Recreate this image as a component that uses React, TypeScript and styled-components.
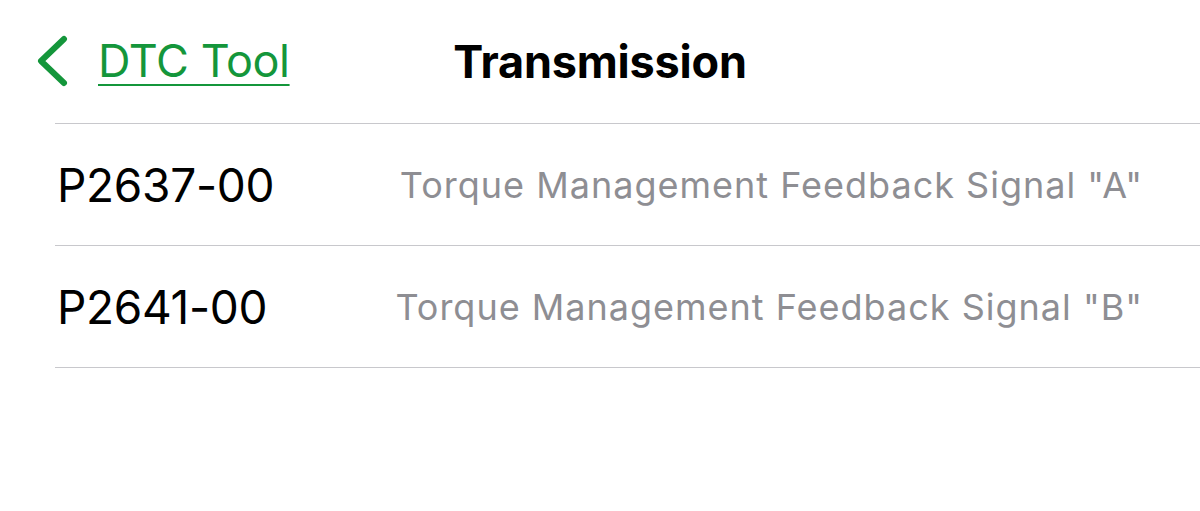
import styled, { createGlobalStyle } from "styled-components";

const GlobalStyle = createGlobalStyle`
  html, body {
    margin: 0;
    padding: 0;
    background: #ffffff;
  }
  body {
    font-family: Inter, "Noto Sans", "Liberation Sans", sans-serif;
    -webkit-font-smoothing: antialiased;
  }
`;

const Screen = styled.div`
  width: 1200px;
  height: 511px;
  background: #ffffff;
  overflow: hidden;
`;

const NavBar = styled.header`
  display: grid;
  grid-template-columns: 1fr auto 1fr;
  align-items: center;
  height: 123px;
  box-sizing: border-box;
`;

const BackButton = styled.a`
  display: flex;
  align-items: center;
  gap: 28px;
  margin: -2px 0 0 36px;
  color: #14963b;
  text-decoration: none;
  cursor: pointer;
`;

const BackLabel = styled.span`
  font-size: 45px;
  font-weight: 400;
  letter-spacing: -0.4px;
  text-decoration: underline;
  text-decoration-thickness: 2px;
  text-underline-offset: 7px;
`;

const Title = styled.h1`
  margin: 0;
  font-size: 45px;
  font-weight: 700;
  color: #000000;
  letter-spacing: -0.2px;
`;

const List = styled.ul`
  list-style: none;
  margin: 0 0 0 55px;
  padding: 0;
  border-top: 1px solid #c8c8cc;
`;

const Row = styled.li`
  display: flex;
  align-items: center;
  justify-content: space-between;
  height: 121px;
  padding: 0 57px 0 2px;
  border-bottom: 1px solid #c8c8cc;
`;

const Code = styled.span`
  font-size: 46px;
  font-weight: 400;
  color: #000000;
  letter-spacing: -0.3px;
`;

const Description = styled.span`
  font-size: 36px;
  font-weight: 400;
  color: #8e8e93;
  letter-spacing: 1px;
`;

const Chevron = () => (
  <svg width="34" height="52" viewBox="0 0 34 52" fill="none">
    <path
      d="M28 4 L5 26 L28 48"
      stroke="currentColor"
      strokeWidth="6"
      strokeLinecap="round"
      strokeLinejoin="round"
    />
  </svg>
);

const codes = [
  { code: "P2637-00", text: 'Torque Management Feedback Signal "A"' },
  { code: "P2641-00", text: 'Torque Management Feedback Signal "B"' },
];

export default function App() {
  return (
    <Screen>
      <GlobalStyle />
      <NavBar>
        <BackButton>
          <Chevron />
          <BackLabel>DTC Tool</BackLabel>
        </BackButton>
        <Title>Transmission</Title>
        <div />
      </NavBar>
      <List>
        {codes.map((item) => (
          <Row key={item.code}>
            <Code>{item.code}</Code>
            <Description>{item.text}</Description>
          </Row>
        ))}
      </List>
    </Screen>
  );
}
